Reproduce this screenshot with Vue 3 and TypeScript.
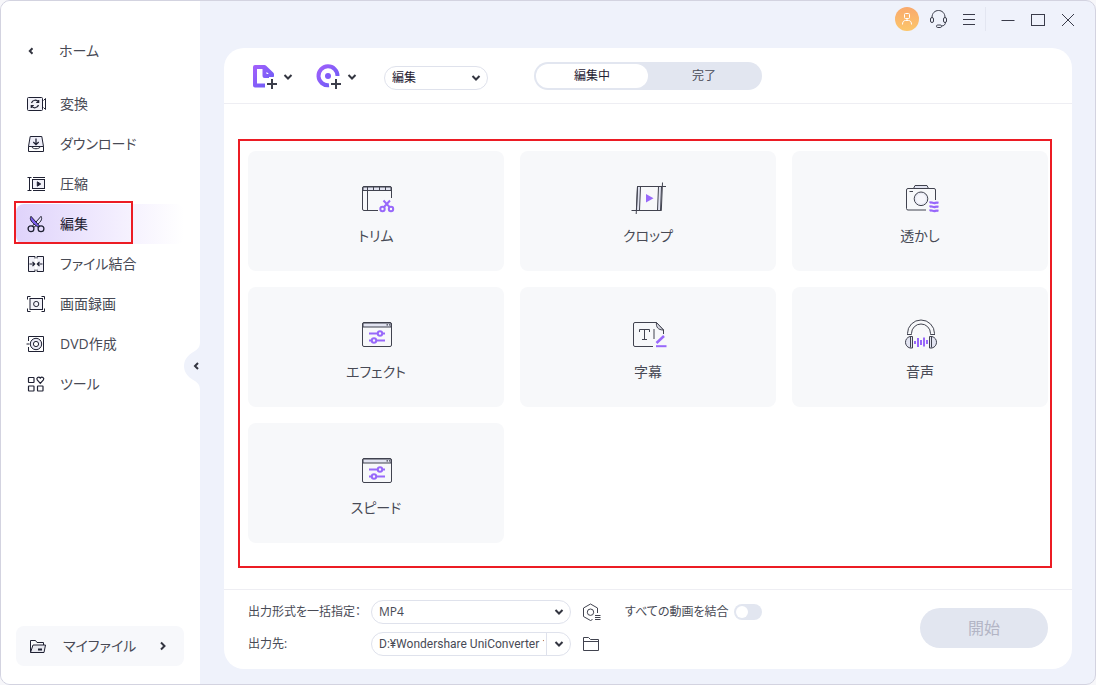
<script setup lang="ts">
import { ref } from 'vue'

interface NavItem { id: string; label: string; icon: string }
interface Tool { label: string; icon: string }

const navItems: NavItem[] = [
  {
    id: 'convert',
    label: '変換',
    icon: '<rect x="1.5" y="3.5" width="15" height="13" rx="1" fill="#f1f1f8"/><path d="M17.500 6.500l2-2v11l-2-2"/><path d="M5.500 9a3.800 3.800 0 0 1 7-.8M12.700 6v2.500h-2.500M12.500 11a3.800 3.800 0 0 1-7 .8M5.300 14v-2.500h2.500" stroke-width="1.200"/>'
  },
  {
    id: 'download',
    label: 'ダウンロード',
    icon: '<path d="M2.500 12.500l1.700-10h11.600l1.700 10z" fill="#eeeef8"/><path d="M2.500 12.500h3c1.300 3 7.700 3 9 0h3v5h-15z" fill="#fff"/><path d="M10 4.500v6M7.300 8l2.700 2.700L12.700 8" stroke-width="1.300"/>'
  },
  {
    id: 'compress',
    label: '圧縮',
    icon: '<path d="M3.500 3.500v13M1.500 3.500h4M1.500 16.500h4M7 3.500h12M7 16.500h12"/><rect x="6.500" y="5.500" width="12" height="9" fill="#f1f1f8"/><path d="M11.300 7.800v4.400l3.400-2.200z" fill="#1f2133"/>'
  },
  {
    id: 'edit',
    label: '編集',
    icon: '<path d="M15 2.300c1.800 3 0 6-7.500 11.200l-1-1.500z" fill="#e7e0fb"/><path d="M5 2.300c-1.800 3 0 6 7.500 11.200l1-1.500z" fill="#7b5cf0"/><circle cx="5" cy="14.800" r="2.900" stroke-width="1.300"/><circle cx="15" cy="14.800" r="2.900" stroke-width="1.300"/>'
  },
  {
    id: 'merge',
    label: 'ファイル結合',
    icon: '<path d="M9 4.500v-2H2.500v15H9v-2M11 4.500v-2h6.500v15H11v-2" fill="#f1f1f8"/><path d="M3.500 10h5M6.500 7.800L8.700 10l-2.200 2.200M16.500 10h-5M13.500 7.800L11.300 10l2.200 2.200" stroke-width="1.200"/>'
  },
  {
    id: 'record',
    label: '画面録画',
    icon: '<path d="M1.500 5.500v-3h3M15.500 2.500h3v3M18.500 14.500v3h-3M4.500 17.500h-3v-3"/><rect x="4" y="4.500" width="12.500" height="11" fill="#f1f1f8"/><circle cx="10.200" cy="10" r="2.600"/>'
  },
  {
    id: 'dvd',
    label: 'DVD作成',
    icon: '<path d="M2.500 7V2.500h15v15h-15V13M.5 10h3" /><circle cx="10" cy="10" r="5.700" fill="#e9e9f5"/><circle cx="10" cy="10" r="2.600" fill="#fff"/>'
  },
  {
    id: 'tools',
    label: 'ツール',
    icon: '<g stroke-width="1.200"><rect x="2.500" y="3.500" width="5.500" height="5" rx=".5"/><rect x="2.500" y="12" width="5.500" height="5" rx=".5"/><rect x="11.500" y="12" width="5.500" height="5" rx=".5"/><path d="M14.300 9.300L11.200 6C10 4.200 12.500 1.800 14.300 4c1.800-2.200 4.300.2 3.100 2z"/></g>'
  }
]

const slidersIcon =
  '<rect x="4.500" y="5.500" width="29" height="24" rx="1.500"/><path d="M5 6h28v4H5z" fill="#e2e4f1"/><path d="M28.500 7.800h1.500M31 7.800h1" stroke-width="1.200"/><g stroke="#9868fa" stroke-width="2"><path d="M11 16.500h9M24.500 16.500h2.500M11 23.500h2.500M18 23.500h9"/><circle cx="22" cy="16.500" r="2.200"/><circle cx="16" cy="23.500" r="2.200"/></g>'

const tools: Tool[] = [
  {
    label: 'トリム',
    icon: '<path d="M33.500 17V7a1.500 1.500 0 0 0-1.500-1.500H6A1.500 1.500 0 0 0 4.500 7v21A1.500 1.500 0 0 0 6 29.500h14"/><path d="M5 6h28v3.500H5z" fill="#e2e4f1"/><path d="M9.500 6v23.500M15.500 6v3.500M21.500 6v3.500M27.500 6v3.500"/><g stroke="#9868fa" stroke-width="2"><circle cx="24.500" cy="28" r="2.200"/><circle cx="33" cy="28" r="2.200"/><path d="M25.500 19.500l6 6.500M32 19.500L26 26"/></g>'
  },
  {
    label: 'クロップ',
    icon: '<path d="M7.500 5.500h3l-1 24h-3zM28.500 5.500h3l-1 24h-3z" fill="#e2e4f1"/><path d="M7.500 5.500h28.500M32.500 1.500l-1.200 28M1.500 29.500h30M7.500 5.500L6.200 33"/><path d="M16 13v8.500l7.500-4.200z" fill="#9868fa" stroke="none"/>'
  },
  {
    label: '透かし',
    icon: '<path d="M33.500 19V9A1.500 1.500 0 0 0 32 7.500H6A1.500 1.500 0 0 0 4.500 9v18.500A1.500 1.500 0 0 0 6 29h18"/><path d="M11.500 7.500l1.500-3h12l1.500 3z" fill="#e2e4f1"/><path d="M7.500 10.500H11"/><circle cx="19" cy="17.800" r="6.800" fill="#e9eaf4"/><circle cx="19" cy="17.800" r="4.800" fill="#f6f6fb" stroke="none"/><path d="M27.500 21.800c2-1.300 3.500.7 5 .3s2-.8 4-.3M27.500 25.800c2-1.300 3.500.7 5 .3s2-.8 4-.3M27.500 29.800c2-1.300 3.500.7 5 .3s2-.8 4-.3" stroke="#9868fa" stroke-width="2.300"/>'
  },
  { label: 'エフェクト', icon: slidersIcon },
  {
    label: '字幕',
    icon: '<path d="M23 29.500H5A1.500 1.500 0 0 1 3.500 28V7A1.500 1.500 0 0 1 5 5.500h21.500l7 7.500v4"/><path d="M26.500 5.500c-.7 4.500 1.500 7.500 7 7.500z" fill="#d5d6e0"/><path d="M9.500 15v-2.500h10V15M14.500 12.500v10M12 22.500h5M24 12v10"/><path d="M34 19l-7.500 7" stroke="#9868fa" stroke-width="2.500"/><path d="M26 29.200h10.500" stroke="#9868fa" stroke-width="2"/>'
  },
  {
    label: '音声',
    icon: '<path d="M5.500 18v-1.500a13.500 13.500 0 0 1 27 0V18M9.500 17.500v-1a9.500 9.500 0 0 1 19 0v1M5.500 17.500h4M28.500 17.500h4"/><path d="M10.500 19.500v11.500H8c-6-1.500-6-10 0-11.500zM27.500 19.500v11.500H30c6-1.500 6-10 0-11.500z" fill="#e2e4f1"/><path d="M8.500 19.500v11M29.500 19.500v11"/><path d="M13 24v3M16 21v9M19 23v5M22 20.500v9M25 23v4" stroke="#9868fa" stroke-width="2"/>'
  },
  { label: 'スピード', icon: slidersIcon }
]

const active = ref('edit')
const tab = ref<'editing' | 'done'>('editing')
const category = ref('編集')
const format = ref('MP4')
const outputPath = ref('D:¥Wondershare UniConverter 14')
const mergeAll = ref(false)
</script>

<template>
  <div class="window">
    <aside class="sidebar">
      <a class="home" href="#">
        <svg class="home-arrow" viewBox="0 0 8 10" aria-hidden="true"><path d="M5.500 2.200L2.800 5l2.700 2.800" /></svg>
        <span>ホーム</span>
      </a>
      <nav class="nav">
        <button
          v-for="item in navItems"
          :key="item.id"
          type="button"
          class="nav-item"
          :class="{ active: item.id === active }"
          @click="active = item.id"
        >
          <svg class="nav-icon" viewBox="0 0 20 20" aria-hidden="true" v-html="item.icon"></svg>
          <span>{{ item.label }}</span>
        </button>
      </nav>
      <button type="button" class="my-files">
        <svg class="nav-icon" viewBox="0 0 20 20" aria-hidden="true">
          <path d="M2.500 16.500v-12h5l1.500 2h6.500v2.500" />
          <path d="M2.500 16.500L5 9h12.500L16 16.500z" fill="#e8e9f0" />
          <path d="M10 13.500h4" stroke-width="2" />
        </svg>
        <span>マイファイル</span>
        <svg class="chevron" viewBox="0 0 8 10" aria-hidden="true"><path d="M2 1.500L5.500 5 2 8.500" /></svg>
      </button>
      <button type="button" class="collapse" aria-label="サイドバーを閉じる">
        <svg viewBox="0 0 16 48" aria-hidden="true">
          <path d="M16 0c0 7-4 8-9 11.500C-2.300 18-2.300 30 7 36.500 12 40 16 41 16 48z" fill="#eff2fb" />
          <path d="M14 21l-3 3 3 3" fill="none" stroke="#333540" stroke-width="2" />
        </svg>
      </button>
    </aside>

    <main class="main">
      <header class="titlebar">
        <button type="button" class="avatar" aria-label="アカウント">
          <svg viewBox="0 0 24 24" aria-hidden="true">
            <rect x="9.500" y="6.500" width="5" height="5" rx="1" />
            <path d="M12 11.500v2M7.500 17.500c0-2.500 1-4 3-4h3c2 0 3 1.500 3 4" />
          </svg>
        </button>
        <button type="button" class="title-button" aria-label="サポート">
          <svg viewBox="0 0 20 20" aria-hidden="true">
            <path d="M3 8.500C3 4 6 1.500 9.500 1.500S16 4 16 8.500M16.500 13c0 2.500-1.500 4-4 4" />
            <rect x="1.500" y="8.500" width="3" height="5" rx="1.500" />
            <rect x="14.500" y="8.500" width="3" height="5" rx="1.500" />
            <rect x="7.500" y="16" width="5" height="2.500" rx="1.200" />
          </svg>
        </button>
        <button type="button" class="title-button" aria-label="メニュー">
          <svg viewBox="0 0 20 20" aria-hidden="true"><path d="M4 5.500h12M4 10.500h12M4 15.500h12" /></svg>
        </button>
        <span class="title-divider"></span>
        <button type="button" class="title-button" aria-label="最小化">
          <svg viewBox="0 0 20 20" aria-hidden="true"><path d="M3.500 11.500h13" /></svg>
        </button>
        <button type="button" class="title-button" aria-label="最大化">
          <svg viewBox="0 0 20 20" aria-hidden="true"><rect x="3.500" y="5.500" width="13" height="11" /></svg>
        </button>
        <button type="button" class="title-button" aria-label="閉じる">
          <svg viewBox="0 0 20 20" aria-hidden="true"><path d="M4 5l12 12M16 5L4 17" /></svg>
        </button>
      </header>

      <section class="panel">
        <div class="toolbar">
          <button type="button" class="add" aria-label="ファイルを追加">
            <svg class="add-icon" viewBox="0 0 26 26" aria-hidden="true">
              <defs>
                <linearGradient id="violet" x1="0" y1="0" x2="1" y2="1">
                  <stop offset="0" stop-color="#a060fb" />
                  <stop offset="1" stop-color="#6a5cf6" />
                </linearGradient>
              </defs>
              <path d="M13 21.500H3V3h9.500l7.500 7.200V12h-7.500V3" fill="none" stroke="url(#violet)" stroke-width="4" stroke-linejoin="round" />
              <path d="M19.500 13v12M13.500 20h12" stroke="#fff" stroke-width="5" />
              <path d="M20 15v10M15 20h10" stroke="#3c3e4b" stroke-width="2" />
            </svg>
            <svg class="caret" viewBox="0 0 10 8" aria-hidden="true"><path d="M1.500 2L5 5.500 8.500 2" /></svg>
          </button>
          <button type="button" class="add" aria-label="ディスクを追加">
            <svg class="add-icon" viewBox="0 0 26 26" aria-hidden="true">
              <path d="M21.500 12A9.500 9.500 0 1 0 13 21.300" fill="none" stroke="url(#violet)" stroke-width="4" />
              <circle cx="12" cy="12" r="3" fill="#825cf9" />
              <path d="M19.500 14v12M14 20h12" stroke="#fff" stroke-width="4" />
              <path d="M20 15v10M15 20h10" stroke="#3c3e4b" stroke-width="2" />
            </svg>
            <svg class="caret" viewBox="0 0 10 8" aria-hidden="true"><path d="M1.500 2L5 5.500 8.500 2" /></svg>
          </button>
          <div class="select category">
            <select v-model="category" aria-label="カテゴリ">
              <option>編集</option>
            </select>
            <svg class="caret" viewBox="0 0 10 8" aria-hidden="true"><path d="M1.500 2L5 5.500 8.500 2" /></svg>
          </div>
          <div class="segmented">
            <button type="button" :class="{ on: tab === 'editing' }" @click="tab = 'editing'">編集中</button>
            <button type="button" :class="{ on: tab === 'done' }" @click="tab = 'done'">完了</button>
          </div>
        </div>

        <div class="content">
          <div class="cards">
            <button v-for="tool in tools" :key="tool.label" type="button" class="card">
              <svg class="card-icon" viewBox="0 0 36 36" aria-hidden="true" v-html="tool.icon"></svg>
              <span>{{ tool.label }}</span>
            </button>
          </div>
        </div>

        <footer class="footer">
          <div class="output">
            <label for="format">出力形式を一括指定：</label>
            <div class="select">
              <select id="format" v-model="format">
                <option>MP4</option>
              </select>
              <svg class="caret" viewBox="0 0 10 8" aria-hidden="true"><path d="M1.500 2L5 5.500 8.500 2" /></svg>
            </div>
            <button type="button" class="icon-button" aria-label="出力設定">
              <svg viewBox="0 0 20 20" aria-hidden="true">
                <path d="M10.500 17.500L8.500 18.500 1.500 14.500V6L8.500 2l7 4v5" />
                <circle cx="8.500" cy="10.200" r="3.200" />
                <path d="M13 13.500h5.500M13 15.500h5.500M13 17.500h5.500" />
              </svg>
            </button>
            <label for="path">出力先:</label>
            <div class="path-box">
              <input id="path" v-model="outputPath" type="text" readonly />
              <button type="button" aria-label="出力先を選択">
                <svg class="caret" viewBox="0 0 10 8" aria-hidden="true"><path d="M1.500 2L5 5.500 8.500 2" /></svg>
              </button>
            </div>
            <button type="button" class="icon-button" aria-label="フォルダーを開く">
              <svg viewBox="0 0 20 20" aria-hidden="true">
                <path d="M1.500 16.500v-13h5l2 2h8v11zM1.500 7.500h15" />
              </svg>
            </button>
          </div>
          <div class="merge">
            <label for="merge">すべての動画を結合</label>
            <input id="merge" v-model="mergeAll" class="switch" type="checkbox" />
          </div>
          <button type="button" class="start" disabled>開始</button>
        </footer>
      </section>
    </main>
  </div>
</template>

<style>
body {
  margin: 0;
  background: #f7f7fa;
}
</style>

<style scoped>
.window {
  box-sizing: border-box;
  display: flex;
  min-height: 100vh;
  border: 1px solid #d3d3e0;
  border-radius: 10px;
  overflow: hidden;
  background: #eff2fb;
  color: #484a55;
  font-family: "Open Sans", "Noto Sans CJK JP", sans-serif;
  font-size: 14px;
  line-height: 20px;
  font-feature-settings: "palt";
}

button,
select,
input {
  margin: 0;
  padding: 0;
  border: 0;
  background: none;
  color: inherit;
  font: inherit;
  font-feature-settings: inherit;
}

svg {
  display: block;
  flex: none;
}

.sidebar {
  position: relative;
  flex: none;
  box-sizing: border-box;
  display: flex;
  flex-direction: column;
  width: 199px;
  padding: 40px 16px 18px 15px;
  background: #fff;
}

.home {
  display: flex;
  align-items: center;
  gap: 24px;
  padding-left: 11px;
  color: inherit;
  text-decoration: none;
}

.home-arrow,
.chevron {
  width: 8px;
  height: 10px;
  fill: none;
  stroke: #333540;
  stroke-width: 2;
}

.nav {
  display: flex;
  flex-direction: column;
  margin-top: 23px;
}

.nav-item {
  position: relative;
  display: flex;
  align-items: center;
  gap: 14px;
  height: 40px;
  padding-left: 10px;
  border-radius: 8px;
}

.nav-item.active {
  background: linear-gradient(90deg, #dfd3fb, #f3eefe 60%, #fff);
  color: #1f2133;
}

.nav-item.active::after {
  content: "";
  position: absolute;
  top: -3px;
  left: -2px;
  box-sizing: border-box;
  width: 119px;
  height: 43px;
  border: 2px solid #ec1c24;
}

.nav-icon {
  width: 20px;
  height: 20px;
  fill: none;
  stroke: #1f2133;
}

.my-files {
  display: flex;
  align-items: center;
  gap: 15px;
  height: 40px;
  margin-top: auto;
  padding: 0 17px 0 12px;
  border-radius: 8px;
  background: #f7f8fb;
}

.my-files .chevron {
  margin-left: auto;
}

.collapse {
  position: absolute;
  top: 341px;
  right: 0;
  width: 16px;
  height: 48px;
}

.main {
  flex: 1;
  min-width: 0;
  display: flex;
  flex-direction: column;
  padding: 0 23px 15px 24px;
}

.titlebar {
  display: flex;
  align-items: center;
  justify-content: flex-end;
  height: 36px;
  margin: 0 -11px 11px 0;
}

.avatar {
  width: 24px;
  height: 24px;
  margin-right: 5px;
  border-radius: 50%;
  background: linear-gradient(#f9a96d, #fcc66a);
}

.avatar svg {
  fill: none;
  stroke: #fff;
}

.title-button {
  display: grid;
  place-items: center;
  width: 30px;
  height: 30px;
}

.title-button svg {
  width: 20px;
  height: 20px;
  fill: none;
  stroke: #3a3c4a;
}

.title-divider {
  width: 1px;
  height: 24px;
  margin: 0 7px 0 1px;
  background: #e3e6f1;
}

.panel {
  flex: 1;
  display: flex;
  flex-direction: column;
  border-radius: 20px;
  background: #fff;
}

.toolbar {
  display: flex;
  align-items: flex-end;
  padding: 14px 28px 13px;
  border-bottom: 1px solid #eeeef3;
}

.add {
  display: flex;
  align-items: center;
  gap: 5px;
  margin-right: 23px;
}

.add-icon {
  width: 26px;
  height: 26px;
}

.caret {
  width: 10px;
  height: 8px;
  fill: none;
  stroke: #333540;
  stroke-width: 2;
}

.select {
  position: relative;
  box-sizing: border-box;
  height: 24px;
  border: 1px solid #dfe2ec;
  border-radius: 12px;
  font-size: 12px;
}

.select select {
  appearance: none;
  width: 100%;
  height: 22px;
  padding: 0 24px 0 7px;
  line-height: 22px;
}

.select .caret {
  position: absolute;
  top: 7px;
  right: 6px;
  pointer-events: none;
}

.category {
  width: 104px;
  margin: 0 46px 0 4px;
  color: #1f2133;
}

.segmented {
  display: grid;
  grid-template-columns: 112px 112px;
  padding: 2px;
  border-radius: 14px;
  background: #e2e6f0;
  font-size: 12px;
}

.segmented button {
  height: 24px;
  border-radius: 12px;
}

.segmented .on {
  background: #fff;
  color: #1f2133;
}

.content {
  flex: 1;
  padding: 35px 20px 21px 14px;
}

.cards {
  display: grid;
  grid-template-columns: repeat(3, 1fr);
  gap: 16px;
  padding: 10px 2px 23px 8px;
  border: 2px solid #ec1c24;
}

.card {
  display: flex;
  flex-direction: column;
  align-items: center;
  gap: 9px;
  min-height: 120px;
  padding: 30px 0 25px;
  border-radius: 8px;
  background: #f7f8fa;
}

.card-icon {
  width: 36px;
  height: 36px;
  overflow: visible;
  fill: none;
  stroke: #41434f;
}

.footer {
  display: flex;
  align-items: flex-start;
  padding: 10px 24px 13px;
  border-top: 1px solid #eeeef3;
  font-size: 12px;
}

.output {
  display: grid;
  grid-template-columns: 115px 200px 20px;
  align-items: center;
  gap: 8px;
}

.output .icon-button {
  margin-left: 3px;
}

.icon-button svg {
  width: 20px;
  height: 20px;
  fill: none;
  stroke: #41434f;
}

.path-box {
  box-sizing: border-box;
  display: flex;
  height: 24px;
  border: 1px solid #dfe2ec;
  border-radius: 12px;
  overflow: hidden;
}

.path-box input {
  flex: 1;
  min-width: 0;
  margin: 0 2px 0 7px;
  font-family: Roboto, "Noto Sans CJK JP", sans-serif;
}

.path-box button {
  padding: 0 6px 0 7px;
  border-left: 1px solid #dfe2ec;
}

.select select,
.path-box input {
  outline: none;
}

.merge {
  display: flex;
  align-items: center;
  gap: 6px;
  height: 24px;
  margin-left: 26px;
}

.switch {
  appearance: none;
  width: 28px;
  height: 16px;
  border-radius: 8px;
  background: #e2e6f0;
}

.switch::before {
  content: "";
  display: block;
  width: 12px;
  height: 12px;
  margin: 2px;
  border-radius: 50%;
  background: #fff;
}

.switch:checked::before {
  margin-left: 14px;
}

.start {
  align-self: center;
  width: 128px;
  height: 40px;
  margin-left: auto;
  border-radius: 20px;
  background: #e2e6f0;
  color: #b3b5c5;
  font-size: 16px;
}
</style>
